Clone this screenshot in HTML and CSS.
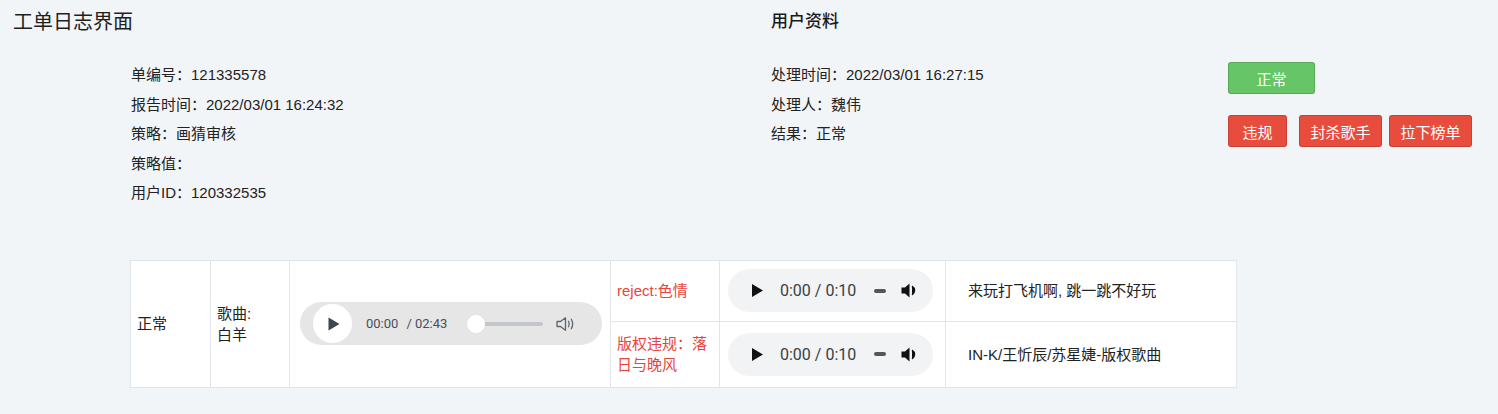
FILE: index.html
```html
<!DOCTYPE html>
<html lang="zh">
<head>
<meta charset="utf-8">
<title>工单日志界面</title>
<link rel="stylesheet" href="styles.css">
</head>
<body>
<div class="page">
  <div class="top">
    <h1 class="title">工单日志界面</h1>
    <h2 class="subtitle">用户资料</h2>
    <div class="info info-left">
      <p>单编号：121335578</p>
      <p>报告时间：2022/03/01 16:24:32</p>
      <p>策略：画猜审核</p>
      <p>策略值：</p>
      <p>用户ID：120332535</p>
    </div>
    <div class="right-body">
      <div class="info info-right">
        <p>处理时间：2022/03/01 16:27:15</p>
        <p>处理人：魏伟</p>
        <p>结果：正常</p>
      </div>
      <div class="actions">
        <button class="btn btn-green btn-normal">正常</button>
        <div class="btn-row">
          <button class="btn btn-red btn-sm btn-first">违规</button>
          <button class="btn btn-red btn-lg">封杀歌手</button>
          <button class="btn btn-red btn-lg">拉下榜单</button>
        </div>
      </div>
    </div>
  </div>

  <table class="log-table">
    <colgroup>
      <col class="c1"><col class="c2"><col class="c3"><col class="c4"><col class="c5"><col class="c6">
    </colgroup>
    <tr class="r1">
      <td rowspan="2" class="cell-text">正常</td>
      <td rowspan="2" class="cell-text">歌曲:<br>白羊</td>
      <td rowspan="2" class="cell-player">
        <div class="player">
          <span class="play-circle">
            <svg width="12" height="14" viewBox="0 0 12 14"><path d="M0.5 0.5 L11.5 7 L0.5 13.5 Z" fill="#3d4751"/></svg>
          </span>
          <span class="time">00:00</span>
          <span class="time dur">/ 02:43</span>
          <span class="track"><span class="knob"></span></span>
          <svg class="vol" width="19" height="16" viewBox="0 0 19 16"><path d="M1 5.5 H4.5 L9.5 1.8 V14.2 L4.5 10.5 H1 Z" fill="none" stroke="#5b6570" stroke-width="1.3" stroke-linejoin="round"/><path d="M12.5 5.3 Q14 8 12.5 10.7" fill="none" stroke="#5b6570" stroke-width="1.3" stroke-linecap="round"/><path d="M15.3 3.3 Q18 8 15.3 12.7" fill="none" stroke="#5b6570" stroke-width="1.3" stroke-linecap="round"/></svg>
        </div>
      </td>
      <td class="cell-text red">reject:色情</td>
      <td class="cell-audio">
        <div class="audio">
          <svg class="a-play" width="11" height="13" viewBox="0 0 11 13"><path d="M0 0 L11 6.5 L0 13 Z" fill="#111"/></svg>
          <span class="a-time">0:00 / 0:10</span>
          <span class="a-dash"></span>
          <svg class="a-vol" width="17" height="17" viewBox="0 0 17 17"><path d="M0.5 5.5 H4 L8.5 1.5 V15.5 L4 11.5 H0.5 Z" fill="#111"/><path d="M11 4.2 A5 5 0 0 1 11 12.8 Z" fill="#111"/><path d="M11 4.2 A5 5 0 0 1 11 12.8" fill="none" stroke="#111" stroke-width="1.6"/></svg>
        </div>
      </td>
      <td class="cell-desc">来玩打飞机啊, 跳一跳不好玩</td>
    </tr>
    <tr class="r2">
      <td class="cell-text red">版权违规：落日与晚风</td>
      <td class="cell-audio">
        <div class="audio">
          <svg class="a-play" width="11" height="13" viewBox="0 0 11 13"><path d="M0 0 L11 6.5 L0 13 Z" fill="#111"/></svg>
          <span class="a-time">0:00 / 0:10</span>
          <span class="a-dash"></span>
          <svg class="a-vol" width="17" height="17" viewBox="0 0 17 17"><path d="M0.5 5.5 H4 L8.5 1.5 V15.5 L4 11.5 H0.5 Z" fill="#111"/><path d="M11 4.2 A5 5 0 0 1 11 12.8 Z" fill="#111"/><path d="M11 4.2 A5 5 0 0 1 11 12.8" fill="none" stroke="#111" stroke-width="1.6"/></svg>
        </div>
      </td>
      <td class="cell-desc">IN-K/王忻辰/苏星婕-版权歌曲</td>
    </tr>
  </table>
</div>
</body>
</html>
```
FILE: styles.css
```css
html, body {
  margin: 0;
  padding: 0;
  background: #f2f5f8;
}
body {
  font-family: "Liberation Sans", "Noto Sans CJK SC", sans-serif;
  color: #222;
  font-size: 15px;
}
.page {
  padding: 8px 13px 0;
}
.top {
  display: grid;
  grid-template-columns: 758px 1fr;
  row-gap: 24px;
}
.title {
  margin: 0;
  font-size: 20px;
  font-weight: 400;
  line-height: 28px;
  color: #1f1f1f;
}
.subtitle {
  margin: 0;
  font-size: 17px;
  font-weight: 500;
  line-height: 28px;
  color: #1a1a1a;
}
.info p {
  margin: 0;
  line-height: 29.6px;
  font-size: 15px;
}
.info-left {
  padding-left: 118px;
}
.right-body {
  display: flex;
}
.info-right {
  width: 457px;
}
.actions {
  display: flex;
  flex-direction: column;
  padding-top: 2px;
}
.btn {
  font-family: inherit;
  font-size: 15px;
  color: #fff;
  height: 32px;
  border: 1px solid rgba(0, 0, 0, 0.14);
  border-radius: 3px;
  padding: 0;
  cursor: pointer;
}
.btn-green {
  background: #66c566;
}
.btn-red {
  background: #e84c3d;
}
.btn-normal {
  width: 87px;
}
.btn-row {
  display: flex;
  gap: 7px;
  margin-top: 21px;
}
.btn-sm {
  width: 59px;
}
.btn-first {
  margin-right: 5px;
}
.btn-lg {
  width: 83px;
}

.log-table {
  margin-top: 52px;
  margin-left: 117px;
  border-collapse: collapse;
  table-layout: fixed;
  width: 1106px;
  background: #fff;
  font-size: 15px;
  line-height: 21px;
  color: #222;
}
.log-table td {
  border: 1px solid #e1e4e8;
  vertical-align: middle;
  padding: 0;
}
.c1 { width: 80px; }
.c2 { width: 79px; }
.c3 { width: 321px; }
.c4 { width: 109px; }
.c5 { width: 226px; }
.c6 { width: 291px; }
.r1 { height: 61px; }
.r2 { height: 66px; }
.cell-text {
  padding: 0 6px !important;
}
.red {
  color: #e8443a;
}
.cell-player {
  padding-left: 10px !important;
}
.cell-audio {
  padding-left: 8px !important;
}
.cell-desc {
  padding-left: 22px !important;
}

.player {
  width: 302px;
  height: 43px;
  border-radius: 22px;
  background: #e6e6e6;
  display: flex;
  align-items: center;
  box-sizing: border-box;
  padding-left: 13px;
}
.play-circle {
  width: 39px;
  height: 39px;
  border-radius: 50%;
  background: #fff;
  display: flex;
  align-items: center;
  justify-content: center;
  padding-left: 2px;
  box-sizing: border-box;
}
.time {
  font-family: "Roboto", "Liberation Sans", sans-serif;
  font-size: 13px;
  color: #47505a;
  margin-left: 14px;
}
.time.dur {
  margin-left: 8px;
}
.track {
  position: relative;
  width: 76px;
  height: 4px;
  border-radius: 2px;
  background: #c2c6cb;
  margin-left: 20px;
}
.knob {
  position: absolute;
  left: 0;
  top: -7px;
  width: 18px;
  height: 18px;
  border-radius: 50%;
  background: #fff;
}
.vol {
  margin-left: 13px;
}

.audio {
  width: 205px;
  height: 43px;
  border-radius: 22px;
  background: #f1f3f4;
  display: flex;
  align-items: center;
  box-sizing: border-box;
  padding-left: 24px;
}
.a-time {
  font-family: "Roboto", "Liberation Sans", sans-serif;
  font-size: 16px;
  color: #3c4043;
  margin-left: 17px;
}
.a-dash {
  width: 12px;
  height: 4px;
  border-radius: 2px;
  background: #555;
  margin-left: 18px;
}
.a-vol {
  margin-left: 15px;
}
```
